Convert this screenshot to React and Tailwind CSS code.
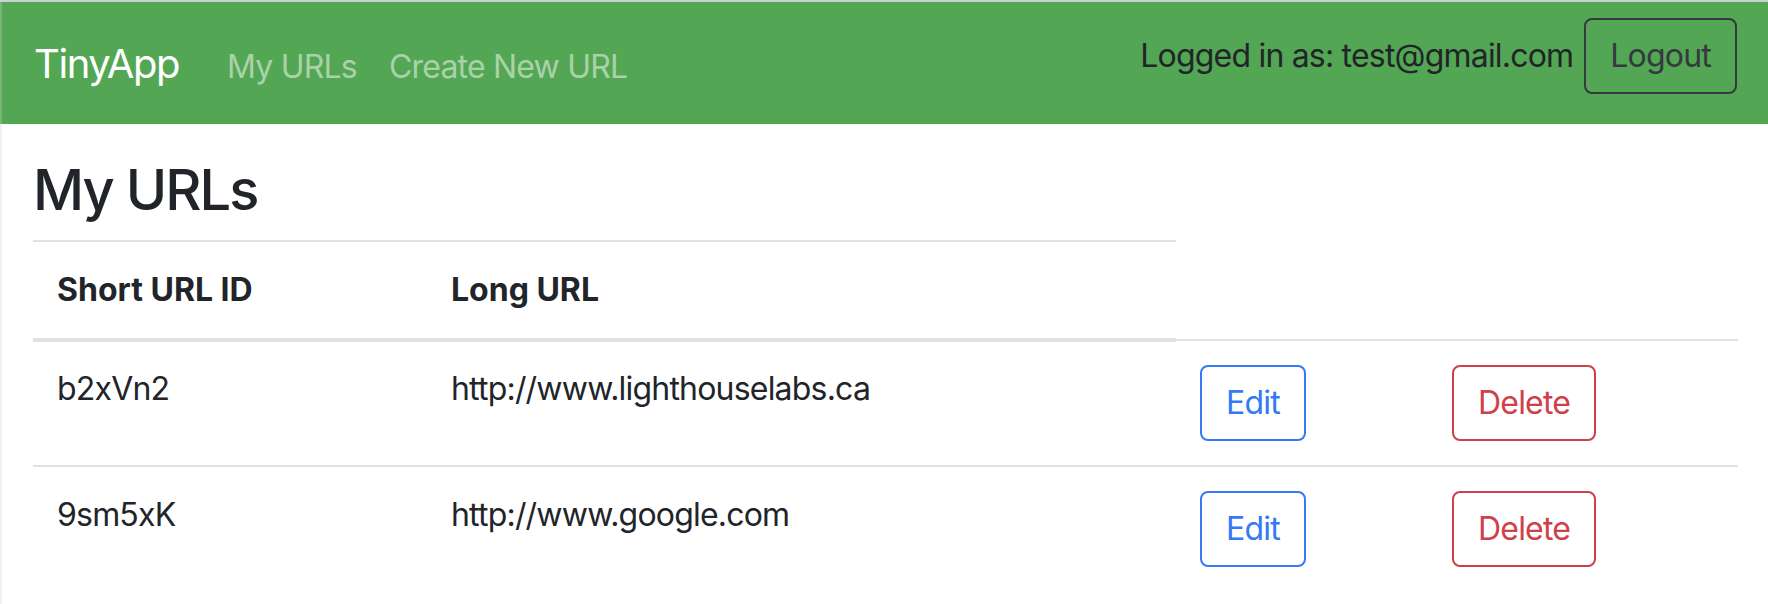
const urls = [
  { id: "b2xVn2", longURL: "http://www.lighthouselabs.ca" },
  { id: "9sm5xK", longURL: "http://www.google.com" },
];

export default function App() {
  return (
    <div className="flex min-h-screen flex-col bg-white font-['Inter','Liberation_Sans',sans-serif] text-[32px] leading-[48px] tracking-[-0.025em] text-[#212529] border-t-2 border-t-[#cfcfcf]">
      {/* Navbar */}
      <nav className="flex h-[122px] items-start justify-between border-l-2 border-l-[#75b575] bg-[#53a653] pl-[32px] pr-[31px] pt-[16px]">
        <div className="mt-[16px] flex items-baseline">
          <a className="mr-[32px] text-[40px] leading-[60px] tracking-[-0.035em] text-white">TinyApp</a>
          <a className="px-[16px] text-white/50">My URLs</a>
          <a className="px-[16px] text-white/50">Create New URL</a>
        </div>

        <div className="flex items-center">
          <span className="mr-[11px]">Logged in as: test@gmail.com</span>
          <button className="rounded-[8px] border-2 border-[#343a40] px-[24px] py-[12px] text-[#343a40]">
            Logout
          </button>
        </div>
      </nav>

      {/* Content */}
      <div className="flex-1 border-l-2 border-l-[#f0f0f0] pl-[31px] pr-[30px] pt-[33px]">
        <h3 className="mb-[16px] text-[56px] font-medium leading-[67px] tracking-[-0.035em]">My URLs</h3>

        <div className="w-[1705px]">
          {/* header only spans the first two columns */}
          <div className="-mb-[3px] grid w-[1143px] grid-cols-[394px_749px] border-t-2 border-b-4 border-[#dee2e6] font-bold tracking-normal">
            <div className="p-[24px]">Short URL ID</div>
            <div className="p-[24px]">Long URL</div>
          </div>

          {urls.map((u) => (
            <div
              key={u.id}
              className="grid grid-cols-[394px_749px_252px_310px] border-t-2 border-[#dee2e6]"
            >
              <div className="p-[24px]">{u.id}</div>
              <div className="p-[24px]">{u.longURL}</div>
              <div className="p-[24px]">
                <button className="rounded-[8px] border-2 border-[#3479f6] px-[24px] py-[12px] text-[#3479f6]">
                  Edit
                </button>
              </div>
              <div className="p-[24px]">
                <button className="rounded-[8px] border-2 border-[#cf4049] px-[24px] py-[12px] text-[#cf4049]">
                  Delete
                </button>
              </div>
            </div>
          ))}
        </div>
      </div>
    </div>
  );
}
